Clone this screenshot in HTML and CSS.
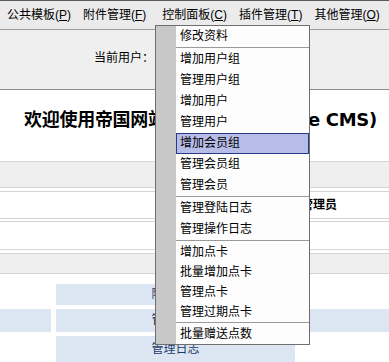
FILE: index.html
```html
<!DOCTYPE html>
<html lang="zh-CN">
<head>
    <meta charset="UTF-8">
    <title>帝国网站管理系统</title>
    <link rel="stylesheet" href="styles.css">
</head>
<body>
    <!-- 顶部菜单 -->
    <div class="menubar">
        <span class="mitem">公共模板(<u>P</u>)</span>
        <span class="mitem">附件管理(<u>F</u>)</span>
        <span class="mitem">控制面板(<u>C</u>)</span>
        <span class="mitem">插件管理(<u>T</u>)</span>
        <span class="mitem">其他管理(<u>O</u>)</span>
    </div>

    <div class="userbar">
        <div class="userlabel">当前用户：</div>
    </div>

    <div class="welcome">
        <h1>欢迎使用帝国网站管理系统 (Empire CMS)</h1>
    </div>

    <div class="panel gray p1"></div>
    <div class="panel p2"><div class="level">级别：管理员</div></div>
    <div class="panel p3"></div>
    <div class="panel gray p4"></div>

    <div class="links">
        <div class="cell c2">附件管理</div>
        <div class="cell c1"></div>
        <div class="cell c2">管理信息</div>
        <div class="cell c3"></div>
        <div class="cell c2">管理日志</div>
    </div>

    <!-- 控制面板下拉菜单 -->
    <div class="dropdown">
        <div class="strip"></div>
        <div class="items">
            <div class="item">修改资料</div>
            <div class="sep"></div>
            <div class="item">增加用户组</div>
            <div class="item">管理用户组</div>
            <div class="item">增加用户</div>
            <div class="item">管理用户</div>
            <div class="item active">增加会员组</div>
            <div class="item">管理会员组</div>
            <div class="item">管理会员</div>
            <div class="sep"></div>
            <div class="item">管理登陆日志</div>
            <div class="item">管理操作日志</div>
            <div class="sep"></div>
            <div class="item small">增加点卡</div>
            <div class="item small">批量增加点卡</div>
            <div class="item small">管理点卡</div>
            <div class="item small">管理过期点卡</div>
            <div class="sep"></div>
            <div class="item small">批量赠送点数</div>
        </div>
    </div>
</body>
</html>
```

FILE: styles.css
```css
* {
    margin: 0;
    padding: 0;
    box-sizing: border-box;
}

body {
    font-family: "Liberation Sans", "Noto Sans CJK SC", sans-serif;
    font-size: 12px;
    color: #000;
    background: #fff;
    position: relative;
    overflow: hidden;
}

.menubar {
    display: flex;
    height: 30px;
    background: #ebebeb;
    border-top: 1px solid #5c5c5c;
    border-bottom: 1px solid #9c9c9c;
    padding-left: 7px;
    align-items: center;
    line-height: 16px;
    padding-bottom: 1px;
}

.mitem {
    margin-right: 12px;
    white-space: nowrap;
}

.mitem:nth-child(2) { margin-right: 16px; }

.mitem u {
    text-decoration: underline;
}

.userbar {
    display: flex;
    height: 60px;
    background: #efefef;
    border-bottom: 1px solid #8c8c8c;
    padding-top: 20px;
    line-height: 16px;
}

.userlabel {
    width: 154px;
    text-align: right;
}

.welcome {
    height: 71px;
    padding-top: 18px;
    padding-left: 12px;
    text-align: center;
}

.welcome h1 {
    font-family: "DejaVu Sans", "Noto Sans CJK SC", sans-serif;
    font-size: 18px;
    font-weight: bold;
    line-height: 24px;
    white-space: nowrap;
    letter-spacing: -0.3px;
}

.panel {
    border-top: 1px solid #d4d4d4;
    border-bottom: 1px solid #d4d4d4;
}

.panel.gray {
    background: #efefef;
}

.p1 { height: 27px; margin-bottom: 3px; }
.p2 { height: 28px; margin-bottom: 2px; }
.p3 { height: 29px; margin-bottom: 3px; }
.p4 { height: 21px; }

.level {
    text-align: right;
    padding-right: 52px;
    font-weight: bold;
    line-height: 26px;
}

.links {
    display: grid;
    grid-template-columns: 51px 239px 1fr;
    grid-template-rows: 21px 23px 28px;
    column-gap: 5px;
    row-gap: 4px;
    margin-top: 10px;
}

.cell {
    background: #dbe6f2;
    color: #1b3a6b;
    text-align: center;
    line-height: 21px;
}

.links .c2:nth-child(1) { grid-column: 2; grid-row: 1; }
.links .c1 { grid-column: 1; grid-row: 2; }
.links .c2:nth-child(3) { grid-column: 2; grid-row: 2; line-height: 23px; }
.links .c3 { grid-column: 3; grid-row: 2; }
.links .c2:nth-child(5) { grid-column: 2; grid-row: 3; line-height: 26px; }

.dropdown {
    position: absolute;
    left: 155px;
    top: 25px;
    width: 155px;
    display: flex;
    border: 1px solid #6e6e6e;
    background: #fdfdfd;
}

.strip {
    width: 20px;
    background: #c8c8c8;
}

.items {
    flex: 1;
}

.item {
    height: 21px;
    line-height: 21px;
    padding-left: 4px;
    white-space: nowrap;
}

.item.small {
    height: 20px;
    line-height: 20px;
}

.item.active {
    background: #b7bde9;
    border: 1px solid #2c3a86;
    padding-left: 3px;
    line-height: 19px;
}

.sep {
    height: 2px;
    border-top: 1px solid #9a9a9a;
}
```
